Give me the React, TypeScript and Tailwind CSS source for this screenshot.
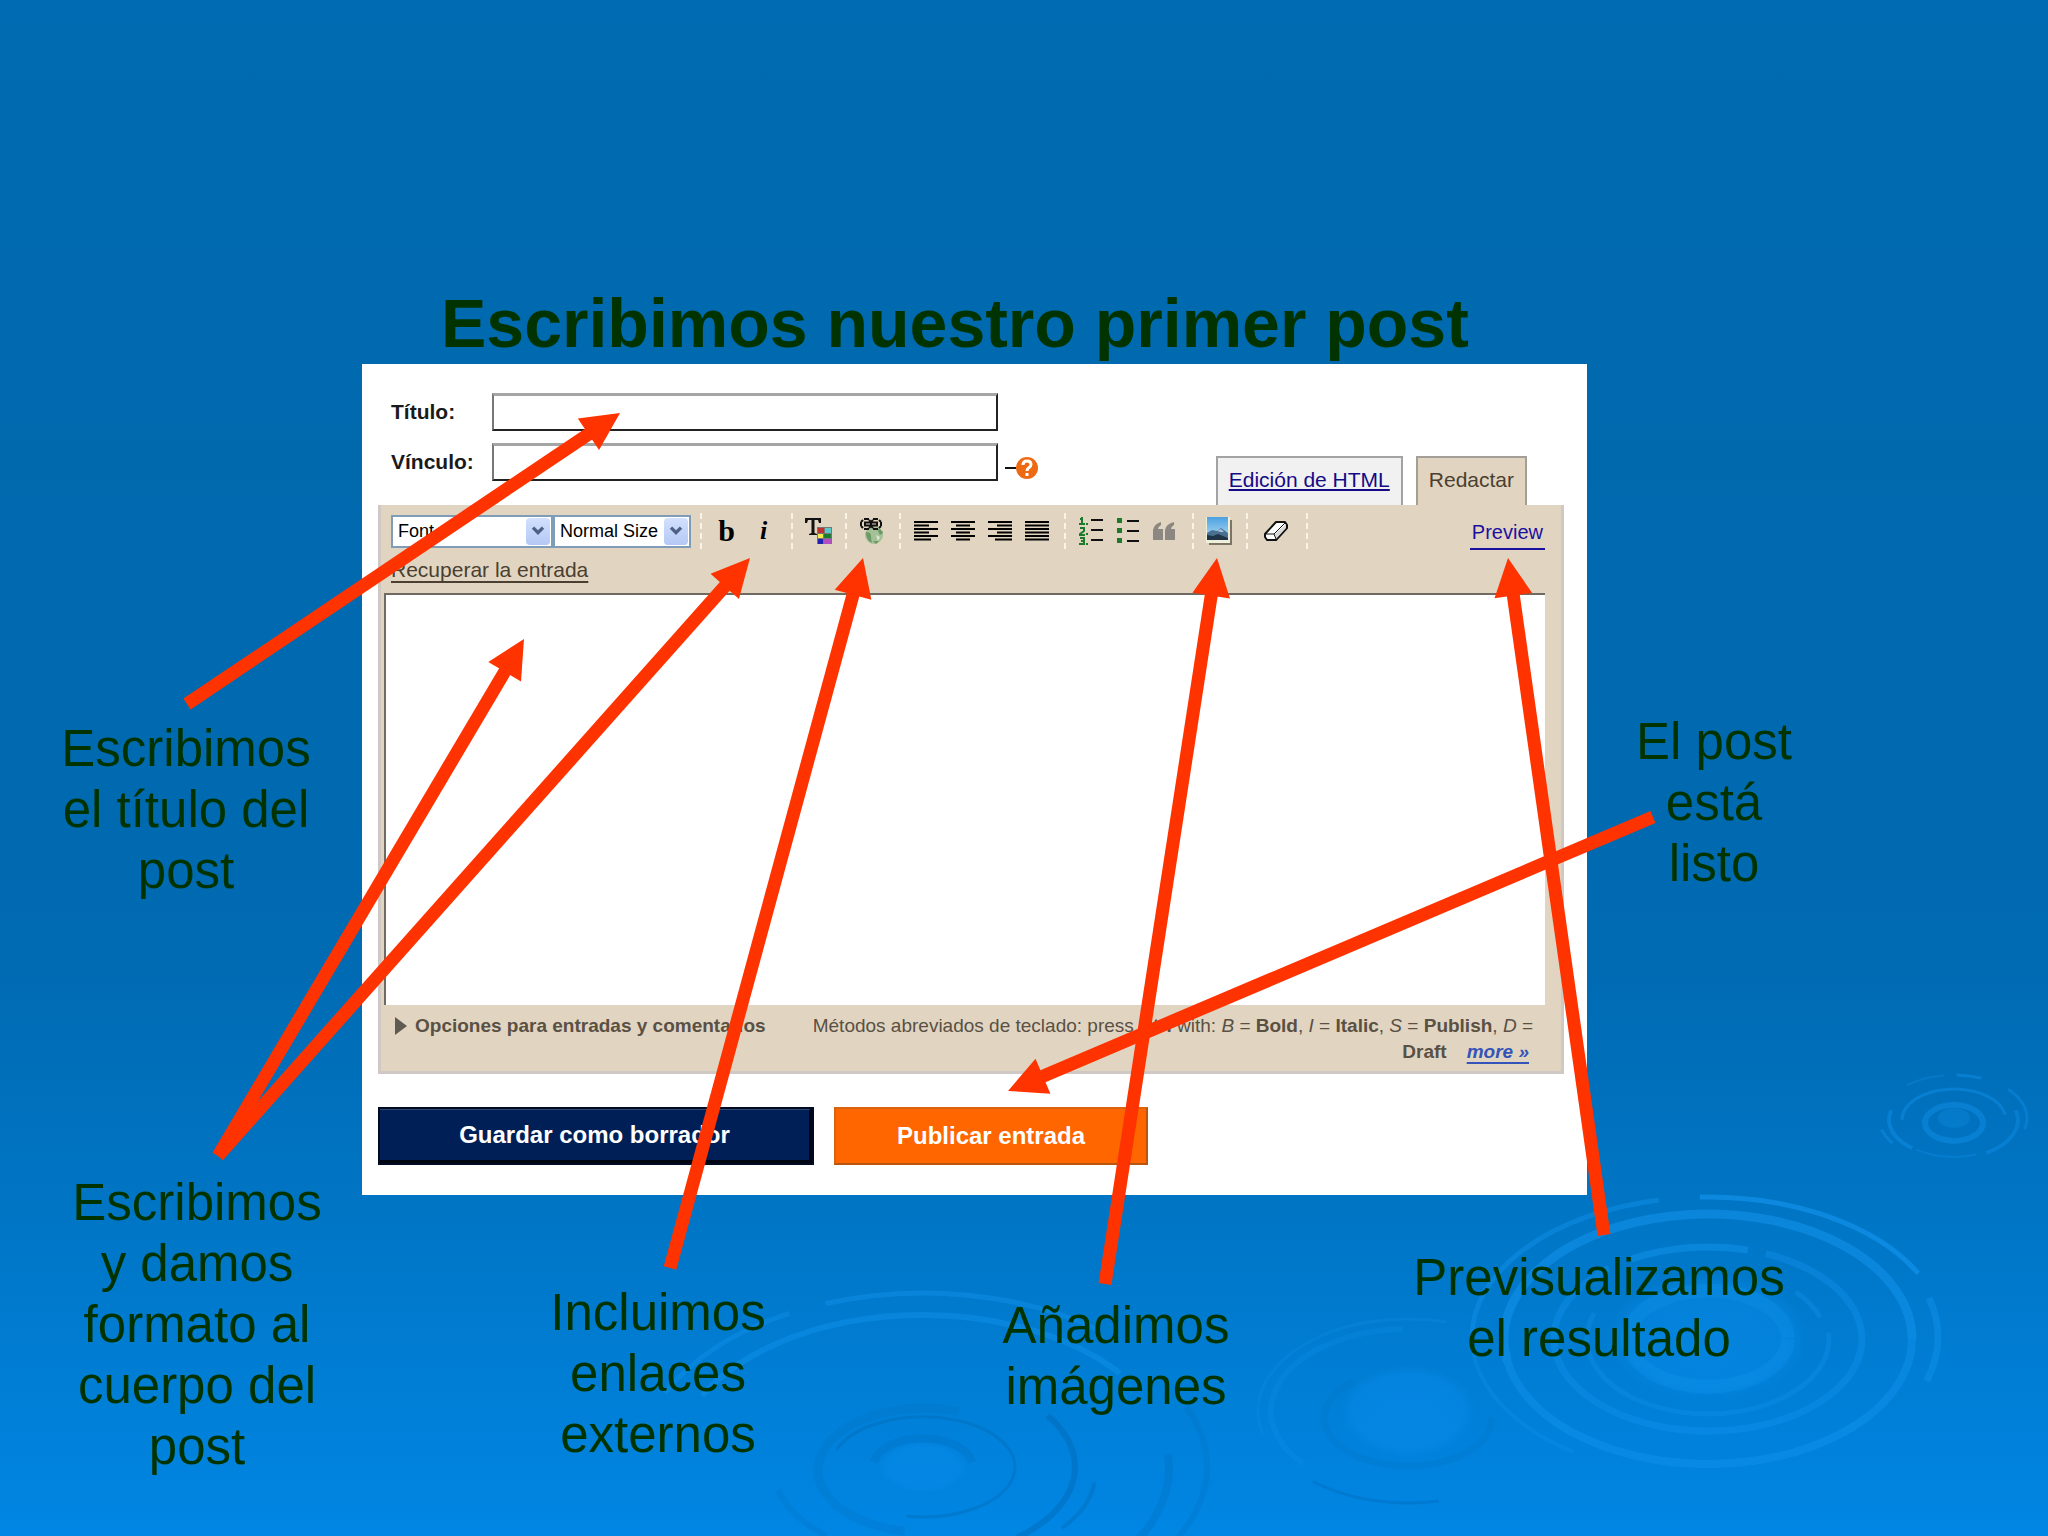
import type { ReactNode } from "react";

type Arc = {
  cx: number;
  cy: number;
  rx: number;
  ry: number;
  from: number;
  to: number;
  width: number;
  color: string;
  opacity?: number;
};

const LIGHT = "#1496f0";
const DARK = "#0068b4";

// angles in degrees, clockwise, 0 = right
const arcs: Arc[] = [
  // big ripple on the right
  { cx: 1708, cy: 1337, rx: 236, ry: 140, from: 268, to: 333, width: 5, color: LIGHT, opacity: 0.6 },
  { cx: 1708, cy: 1337, rx: 236, ry: 140, from: 180, to: 258, width: 5, color: LIGHT, opacity: 0.4 },
  { cx: 1708, cy: 1337, rx: 236, ry: 140, from: 125, to: 180, width: 4, color: LIGHT, opacity: 0.25 },
  { cx: 1708, cy: 1337, rx: 230, ry: 142, from: -16, to: 18, width: 7, color: LIGHT, opacity: 0.4 },
  { cx: 1708, cy: 1339, rx: 204, ry: 125, from: 170, to: 360, width: 9, color: LIGHT, opacity: 0.5 },
  { cx: 1708, cy: 1339, rx: 204, ry: 125, from: 0, to: 170, width: 8, color: LIGHT, opacity: 0.4 },
  { cx: 1708, cy: 1339, rx: 154, ry: 92, from: 240, to: 285, width: 7, color: LIGHT, opacity: 0.45 },
  { cx: 1708, cy: 1339, rx: 154, ry: 92, from: 292, to: 590, width: 7, color: LIGHT, opacity: 0.35 },
  { cx: 1708, cy: 1339, rx: 121, ry: 75, from: -5, to: 200, width: 5, color: LIGHT, opacity: 0.3 },
  { cx: 1708, cy: 1339, rx: 118, ry: 70, from: 318, to: 342, width: 5, color: LIGHT, opacity: 0.3 },
  { cx: 1708, cy: 1339, rx: 80, ry: 48, from: 0, to: 359, width: 14, color: LIGHT, opacity: 0.25 },
  // small ripple at the top right
  { cx: 1954, cy: 1123, rx: 29, ry: 18, from: 0, to: 359, width: 6, color: LIGHT, opacity: 0.4 },
  { cx: 1954, cy: 1120, rx: 52, ry: 31, from: 180, to: 350, width: 3, color: LIGHT, opacity: 0.4 },
  { cx: 1954, cy: 1120, rx: 65, ry: 37, from: 130, to: 195, width: 4, color: LIGHT, opacity: 0.4 },
  { cx: 1954, cy: 1120, rx: 64, ry: 38, from: -15, to: 60, width: 4, color: LIGHT, opacity: 0.35 },
  { cx: 1954, cy: 1118, rx: 73, ry: 43, from: 318, to: 375, width: 3, color: LIGHT, opacity: 0.35 },
  { cx: 1954, cy: 1118, rx: 73, ry: 43, from: 272, to: 292, width: 3, color: LIGHT, opacity: 0.4 },
  { cx: 1954, cy: 1118, rx: 73, ry: 43, from: 230, to: 262, width: 2, color: LIGHT, opacity: 0.25 },
  { cx: 1954, cy: 1118, rx: 75, ry: 44, from: 145, to: 165, width: 3, color: LIGHT, opacity: 0.4 },
  { cx: 1954, cy: 1118, rx: 65, ry: 39, from: 70, to: 125, width: 2, color: LIGHT, opacity: 0.3 },
  // faint ripple between the two big ones
  { cx: 1408, cy: 1411, rx: 137, ry: 82, from: 140, to: 268, width: 6, color: LIGHT, opacity: 0.2 },
  { cx: 1408, cy: 1411, rx: 150, ry: 92, from: 165, to: 285, width: 3, color: LIGHT, opacity: 0.2 },
  { cx: 1408, cy: 1418, rx: 84, ry: 48, from: 0, to: 230, width: 7, color: DARK, opacity: 0.14 },
  { cx: 1408, cy: 1411, rx: 148, ry: 92, from: 78, to: 130, width: 3, color: DARK, opacity: 0.35 },
  // bottom ripple
  { cx: 923, cy: 1467, rx: 285, ry: 174, from: 250, to: 308, width: 5, color: LIGHT, opacity: 0.4 },
  { cx: 923, cy: 1467, rx: 285, ry: 174, from: 205, to: 242, width: 5, color: LIGHT, opacity: 0.35 },
  { cx: 923, cy: 1467, rx: 250, ry: 152, from: 208, to: 322, width: 6, color: LIGHT, opacity: 0.4 },
  { cx: 923, cy: 1467, rx: 92, ry: 50, from: 200, to: 460, width: 3, color: DARK, opacity: 0.4 },
  { cx: 923, cy: 1470, rx: 106, ry: 62, from: 100, to: 290, width: 9, color: DARK, opacity: 0.18 },
  { cx: 923, cy: 1467, rx: 50, ry: 29, from: 190, to: 350, width: 8, color: DARK, opacity: 0.22 },
  { cx: 923, cy: 1467, rx: 152, ry: 90, from: 325, to: 412, width: 6, color: DARK, opacity: 0.45 },
  { cx: 923, cy: 1475, rx: 172, ry: 90, from: 5, to: 36, width: 4, color: DARK, opacity: 0.4 },
  { cx: 923, cy: 1467, rx: 246, ry: 150, from: -5, to: 30, width: 8, color: DARK, opacity: 0.25 },
  { cx: 923, cy: 1467, rx: 284, ry: 160, from: 338, to: 390, width: 6, color: DARK, opacity: 0.2 },
  { cx: 923, cy: 1467, rx: 150, ry: 90, from: 130, to: 165, width: 6, color: DARK, opacity: 0.18 },
];

const arcPath = ({ cx, cy, rx, ry, from, to }: Arc) => {
  const point = (deg: number) => {
    const a = (deg * Math.PI) / 180;
    return `${(cx + rx * Math.cos(a)).toFixed(1)} ${(cy + ry * Math.sin(a)).toFixed(1)}`;
  };
  const large = to - from > 180 ? 1 : 0;
  return `M${point(from)}A${rx} ${ry} 0 ${large} 1 ${point(to)}`;
};

const Ripples = () => (
  <svg
    className="absolute inset-0 h-full w-full"
    viewBox="0 0 2048 1536"
    preserveAspectRatio="none"
    aria-hidden="true"
  >
    <defs>
      <radialGradient id="glow">
        <stop offset="0" stopColor="#0a8eee" stopOpacity="0.45" />
        <stop offset="0.8" stopColor="#0a8eee" stopOpacity="0.35" />
        <stop offset="1" stopColor="#0a8eee" stopOpacity="0" />
      </radialGradient>
    </defs>
    <ellipse cx="1708" cy="1337" rx="100" ry="64" fill="url(#glow)" />
    <ellipse cx="1408" cy="1411" rx="68" ry="46" fill="url(#glow)" />
    <ellipse cx="1954" cy="1118" rx="16" ry="10" fill="#1496f0" opacity="0.25" />
    <ellipse cx="923" cy="1467" rx="44" ry="26" fill="url(#glow)" />
    {arcs.map((arc, idx) => (
      <path
        key={idx}
        d={arcPath(arc)}
        fill="none"
        stroke={arc.color}
        strokeWidth={arc.width}
        opacity={arc.opacity}
      />
    ))}
  </svg>
);

// [tail x, tail y, tip x, tip y]
const arrows = [
  [187, 704, 620, 413],
  [218, 1156, 750, 558],
  [218, 1156, 524, 639],
  [670, 1268, 863, 558],
  [1105, 1284, 1217, 558],
  [1604, 1235, 1508, 558],
  [1653, 817, 1008, 1091],
];

const HEAD = 38;

const Arrows = () => (
  <svg
    className="pointer-events-none absolute inset-0 h-full w-full"
    viewBox="0 0 2048 1536"
    preserveAspectRatio="none"
    aria-hidden="true"
  >
    {arrows.map(([x1, y1, x2, y2], idx) => {
      const len = Math.hypot(x2 - x1, y2 - y1);
      const ux = (x2 - x1) / len;
      const uy = (y2 - y1) / len;
      const bx = x2 - ux * HEAD;
      const by = y2 - uy * HEAD;
      const half = HEAD / 2;
      return (
        <g key={idx} fill="#ff3300">
          <line x1={x1} y1={y1} x2={bx + ux * 2} y2={by + uy * 2} stroke="#ff3300" strokeWidth="13" />
          <polygon
            points={`${x2},${y2} ${bx - uy * half},${by + ux * half} ${bx + uy * half},${by - ux * half}`}
          />
        </g>
      );
    })}
  </svg>
);

const Note = ({ className, lines }: { className: string; lines: string[] }) => (
  <p
    className={`absolute -translate-x-1/2 whitespace-nowrap text-center text-[51px] leading-[61px] text-[#003300] ${className}`}
  >
    {lines.map((line) => (
      <span key={line} className="block">
        {line}
      </span>
    ))}
  </p>
);

const Field = ({ id, label, children }: { id: string; label: string; children?: ReactNode }) => (
  <div className="flex items-center">
    <label htmlFor={id} className="w-[101px] text-[21px] font-bold text-[#1a1a1a]">
      {label}
    </label>
    <input
      id={id}
      type="text"
      className="h-[38px] w-[506px] border-2 border-t-[3px] border-[#222] border-l-[#777] border-t-[#a5a5a5] bg-white px-2 text-[21px] outline-none"
    />
    {children}
  </div>
);

const ToolSelect = ({ label, value, className }: { label: string; value: string; className: string }) => (
  <div className={`relative h-[33px] ${className}`}>
    <select
      aria-label={label}
      className="h-full w-full appearance-none border-2 border-[#7f9db9] bg-white pl-[5px] text-[18px] text-black outline-none"
    >
      <option>{value}</option>
    </select>
    <span className="pointer-events-none absolute inset-y-[3px] right-[3px] flex w-6 items-center justify-center rounded-sm bg-linear-to-b from-[#d3e0fd] to-[#b3c8f5]">
      <svg width="14" height="10" viewBox="0 0 16 12" fill="none" stroke="#4d6185" strokeWidth="4">
        <path d="M2 2l6 6 6-6" />
      </svg>
    </span>
  </div>
);

const Separator = () => <span className="ml-[9px] mr-[6px] h-9 border-l-2 border-dashed border-[#fbf3e6]" />;

const Tool = ({ label, children }: { label: string; children: ReactNode }) => (
  <button type="button" aria-label={label} className="flex h-9 w-[37px] items-center justify-center">
    {children}
  </button>
);

const AlignIcon = ({ rows }: { rows: [number, number][] }) => (
  <svg width="24" height="20" viewBox="0 0 24 20" fill="#000">
    {rows.map(([x, w], idx) => (
      <rect key={idx} x={x} y={idx * 3.5} width={w} height="2" />
    ))}
  </svg>
);

const TextColorIcon = () => (
  <svg width="28" height="28" viewBox="0 0 28 28">
    <path d="M1 1h16v5h-2l-1-3h-3.500v13l2.500 1v1H5v-1l2.500-1V3H4L3 6H1z" fill="#111" />
    <rect x="13" y="10" width="15" height="17" fill="#77777a" />
    <rect x="14" y="11" width="6" height="5" fill="#c03030" />
    <rect x="21" y="11" width="6" height="5" fill="#5cc8c8" />
    <rect x="14" y="17" width="5" height="4" fill="#f5ec50" />
    <rect x="20" y="17" width="7" height="4" fill="#1d7a35" />
    <rect x="14" y="22" width="5" height="5" fill="#2222b0" />
    <rect x="20" y="22" width="7" height="5" fill="#b050c0" />
  </svg>
);

const LinkIcon = () => (
  <svg width="26" height="28" viewBox="0 0 26 28">
    <circle cx="15" cy="18" r="9" fill="#a3c096" />
    <path d="M7 15q5 0 5 4t1 7q-6-3-6-11zM18 12q5 0 6 4l-3 2zM14 24l6 0-3 3z" fill="#6c9966" />
    <path d="M17 18l4 2-2 4z" fill="#dbe8d0" />
    <g fill="none" stroke="#111" strokeWidth="2">
      <path d="M5 2h5M14 2h5M5 12h5M14 12h5M2 5v4M22 5v4M4 3L2 5M20 3l2 2M4 11L2 9M20 11l2-2M10 3l2 2 2-2M10 11l2-2 2 2" />
      <path d="M6 5.500h12v3H6zM12 5v4" />
    </g>
  </svg>
);

const NumberedIcon = () => (
  <svg width="26" height="30" viewBox="0 0 26 30">
    <g fill="none" stroke="#1d7a2c" strokeWidth="2">
      <path d="M2 3h2V1v7M1 8h6M2 12h4v3l-4 3v1h5M2 22h4v3H3h3v3H1" />
      <path d="M8 8h2M8 18h2M8 28h2" />
    </g>
    <path d="M13 4h12M13 14h12M13 24h12" stroke="#111" strokeWidth="2" />
  </svg>
);

const BulletIcon = () => (
  <svg width="24" height="28" viewBox="0 0 24 28">
    <path d="M1 1h5v5H1zM1 11h5v5H1zM1 21h5v5H1z" fill="#1d7a2c" />
    <path d="M11 4h12M11 14h12M11 24h12" stroke="#111" strokeWidth="2" />
  </svg>
);

const QuoteIcon = () => (
  <svg width="24" height="20" viewBox="0 0 24 20" fill="#8c8780">
    <path d="M0 19V9Q1 3 8 1v3Q5 6 5 8h5v11zM12 19V9q1-6 9-8v3q-3 2-3 4h4v11z" />
  </svg>
);

const ImageIcon = () => (
  <svg width="28" height="30" viewBox="0 0 28 30">
    <defs>
      <linearGradient id="sky" x1="0" y1="0" x2="0" y2="1">
        <stop offset="0" stopColor="#4aa0e0" />
        <stop offset="1" stopColor="#b9e0f6" />
      </linearGradient>
    </defs>
    <path d="M4 4h23v25H4z" fill="#7c7566" />
    <path d="M1 1h24v26H1z" fill="#eef0dc" />
    <path d="M2 1h21v23H2z" fill="url(#sky)" />
    <path d="M2 17l5-3 5 1 4-3 7 5v7H2z" fill="#4a7090" />
    <path d="M2 19l6 1 5-2 10 4v2H2z" fill="#1f3547" />
    <path d="M12 15l4-2 3 3-3 0z" fill="#a9c4d8" />
  </svg>
);

const EraserIcon = () => (
  <svg width="26" height="22" viewBox="0 0 26 22" strokeLinejoin="round">
    <path d="M2 14L13 2h9l2 3v3L13 20H4l-2-3z" fill="#fff" stroke="#111" strokeWidth="2" />
    <path d="M12 14L23 4v4L13 19z" fill="#d8d8d8" />
    <path d="M3 14h8l11-11M11 14l2 5" fill="none" stroke="#111" strokeWidth="1" />
  </svg>
);

const Toolbar = () => (
  <div className="flex h-9 items-center pl-[10px]">
    <ToolSelect label="Fuente" value="Font" className="w-[162px]" />
    <ToolSelect label="Tamaño" value="Normal Size" className="w-[138px]" />
    <Separator />
    <Tool label="Negrita">
      <span className="font-['Liberation_Serif'] text-[30px] font-bold leading-9 text-black">b</span>
    </Tool>
    <Tool label="Cursiva">
      <span className="font-['Liberation_Serif'] text-[26px] font-bold italic leading-9 text-black">i</span>
    </Tool>
    <Separator />
    <Tool label="Color de texto">
      <TextColorIcon />
    </Tool>
    <Separator />
    <Tool label="Enlace">
      <LinkIcon />
    </Tool>
    <Separator />
    <Tool label="Alinear a la izquierda">
      <AlignIcon rows={[[0, 24], [0, 15], [0, 24], [0, 15], [0, 24], [0, 17]]} />
    </Tool>
    <Tool label="Centrar">
      <AlignIcon rows={[[0, 24], [5, 14], [0, 24], [5, 14], [0, 24], [5, 14]]} />
    </Tool>
    <Tool label="Alinear a la derecha">
      <AlignIcon rows={[[0, 24], [9, 15], [0, 24], [9, 15], [0, 24], [7, 17]]} />
    </Tool>
    <Tool label="Justificar">
      <AlignIcon rows={[[0, 24], [0, 24], [0, 24], [0, 24], [0, 24], [0, 24]]} />
    </Tool>
    <Separator />
    <Tool label="Lista numerada">
      <NumberedIcon />
    </Tool>
    <Tool label="Lista">
      <BulletIcon />
    </Tool>
    <Tool label="Cita">
      <QuoteIcon />
    </Tool>
    <Separator />
    <Tool label="Imagen">
      <ImageIcon />
    </Tool>
    <Separator />
    <div className="flex px-[3px]">
      <Tool label="Borrar formato">
        <EraserIcon />
      </Tool>
    </div>
    <Separator />
    <a
      href="#preview"
      className="ml-auto mr-4 h-[37px] border-b-2 border-[#1c10a0] px-[2px] text-[20px] leading-[38px] text-[#1c10a0]"
    >
      Preview
    </a>
  </div>
);

const Editor = () => (
  <div className="border-x-[3px] border-b-[3px] border-[#cfc8c4] bg-[#e1d5c1] pt-2">
    <Toolbar />
    <div className="pl-[10px] pt-[7px]">
      <a
        href="#recuperar"
        className="text-[21px] leading-[27px] text-[#4a3f30] underline decoration-2 underline-offset-4"
      >
        Recuperar la entrada
      </a>
    </div>
    <textarea
      aria-label="Entrada"
      className="ml-[3px] mt-[9px] block h-[412px] w-[calc(100%-19px)] resize-none border-l-2 border-t-2 border-[#6f6a62] bg-white p-2 text-[21px] outline-none"
    />
    <div className="flex justify-between pb-[6px] pl-[14px] pr-[28px] pt-2 text-[19px] leading-[26px] text-[#5a5044]">
      <button type="button" className="flex items-center gap-2 self-start font-bold">
        <svg width="12" height="18" viewBox="0 0 12 18" fill="#5f5a52">
          <path d="M0 0l12 9-12 9z" />
        </svg>
        Opciones para entradas y comentarios
      </button>
      <p className="text-right">
        Métodos abreviados de teclado: press <b>Ctrl</b> with: <i>B</i> = <b>Bold</b>, <i>I</i> ={" "}
        <b>Italic</b>, <i>S</i> = <b>Publish</b>, <i>D</i> =
        <br />
        <b>Draft</b>
        <a
          href="#more"
          className="ml-[20px] mr-1 font-bold italic text-[#3553b8] underline decoration-2 underline-offset-4"
        >
          more »
        </a>
      </p>
    </div>
  </div>
);

const PostForm = () => (
  <form className="w-[1225px] bg-white pb-[30px] pl-4 pr-[23px] pt-[29px]">
    <div className="flex items-end justify-between pl-[13px] pr-[37px]">
      <div className="flex flex-col gap-3 pb-6">
        <Field id="titulo" label="Título:" />
        <Field id="vinculo" label="Vínculo:">
          <svg className="ml-[7px] mt-3" width="34" height="24" viewBox="0 0 34 24">
            <path d="M0 12h11" stroke="#111" strokeWidth="2" />
            <circle cx="22" cy="12" r="11" fill="#ee6a12" />
            <path
              d="M18 9q0-4 4-4t4 3.500q0 2-2.500 3.500-1.500 1-1.500 3M22 17v3"
              fill="none"
              stroke="#fff"
              strokeWidth="3"
            />
          </svg>
        </Field>
      </div>
      <nav className="flex h-[49px] gap-[13px] text-[21px] leading-[43px]">
        <a
          href="#html"
          className="border-2 border-b-0 border-[#a3a3a6] bg-[#f1f1f1] px-[11px] text-[#140a86] underline decoration-2 underline-offset-2"
        >
          Edición de HTML
        </a>
        <a href="#redactar" className="border-2 border-b-0 border-[#a39f98] bg-[#e1d5c1] px-[11px] text-[#4a3f30]">
          Redactar
        </a>
      </nav>
    </div>
    <Editor />
    <div className="mt-[33px] flex gap-5 text-[24px] font-bold text-white">
      <button
        type="button"
        className="h-[58px] w-[436px] border-b-[5px] border-l-2 border-r-[5px] border-t-[3px] border-[#000514] border-t-[#2c4a72] bg-[#001f57] outline-2 -outline-offset-2 outline-[#000a20]"
      >
        Guardar como borrador
      </button>
      <button
        type="submit"
        className="h-[58px] w-[314px] border-2 border-[#d9640f] border-b-[#b8560f] border-r-[#b8560f] bg-[#ff6600]"
      >
        Publicar entrada
      </button>
    </div>
  </form>
);

export default function App() {
  return (
    <main className="relative min-h-screen w-full overflow-hidden bg-[linear-gradient(to_bottom,#006bb2_0%,#0069ae_30%,#006ab2_62%,#0076c6_80%,#0086e4_100%)] font-['Liberation_Sans',Arial,sans-serif]">
      <Ripples />
      <div className="relative pl-[362px] pt-[284px]">
        <h1 className="mb-[2px] pl-[79px] text-[68px] font-bold leading-[78px] text-[#003300]">
          Escribimos nuestro primer post
        </h1>
        <PostForm />
      </div>

      <Note className="left-[186px] top-[718px]" lines={["Escribimos", "el título del", "post"]} />
      <Note
        className="left-[197px] top-[1172px]"
        lines={["Escribimos", "y damos", "formato al", "cuerpo del", "post"]}
      />
      <Note className="left-[658px] top-[1282px]" lines={["Incluimos", "enlaces", "externos"]} />
      <Note className="left-[1116px] top-[1295px]" lines={["Añadimos", "imágenes"]} />
      <Note className="left-[1599px] top-[1247px]" lines={["Previsualizamos", "el resultado"]} />
      <Note className="left-[1714px] top-[711px]" lines={["El post", "está", "listo"]} />
      <Arrows />
    </main>
  );
}
